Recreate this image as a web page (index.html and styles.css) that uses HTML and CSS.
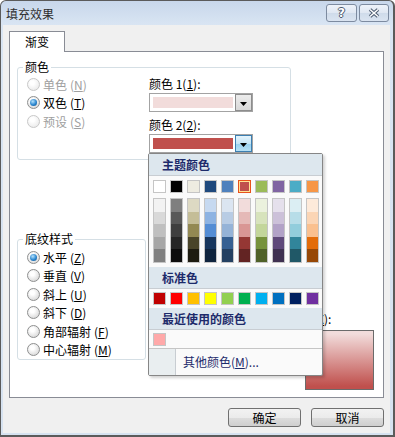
FILE: index.html
```html
<!DOCTYPE html>
<html lang="zh-CN">
  <head>
    <meta charset="UTF-8" />
    <title>填充效果</title>
    <link rel="stylesheet" href="styles.css">
  </head>
  <body>
    <div class="window">
      <div class="titlebar">
        <span class="title">填充效果</span>
        <div class="caption-btns">
          <span class="cap-btn help">?</span>
          <span class="cap-btn close">
            <svg width="12" height="10" viewBox="0 0 12 10">
              <path d="M2 1.5L10 8.5M10 1.5L2 8.5" stroke="#4a596e" stroke-width="3.6" />
              <path d="M2 1.5L10 8.5M10 1.5L2 8.5" stroke="#fff" stroke-width="1.6" />
            </svg>
          </span>
        </div>
      </div>

      <div class="client">
        <div class="tabs"><div class="tab">渐变</div></div>
        <div class="panel">
          <fieldset class="group colors">
            <legend>颜色</legend>
            <div class="color-body">
              <div class="options">
                <div class="opt disabled"><span class="radio"></span>单色<span class="key">(<u>N</u>)</span></div>
                <div class="opt"><span class="radio on"></span>双色<span class="key">(<u>T</u>)</span></div>
                <div class="opt disabled"><span class="radio"></span>预设<span class="key">(<u>S</u>)</span></div>
              </div>
              <div class="pickers">
                <div class="field-label">颜色 1(<u>1</u>):</div>
                <div class="combo">
                  <div class="well"><span class="chip chip-light"></span></div>
                  <span class="drop">
                    <svg width="7" height="4" viewBox="0 0 7 4"><path d="M0 0h7L3.5 4z" fill="#000" /></svg>
                  </span>
                </div>
                <div class="field-label second">颜色 2(<u>2</u>):</div>
                <div class="combo">
                  <div class="well"><span class="chip chip-dark"></span></div>
                  <span class="drop hot">
                    <svg width="7" height="4" viewBox="0 0 7 4"><path d="M0 0h7L3.5 4z" fill="#000" /></svg>
                  </span>
                </div>
              </div>
            </div>
          </fieldset>

          <div class="bottom-row">
            <fieldset class="group shading">
              <legend>底纹样式</legend>
              <div class="shading-body">
                <div class="opt"><span class="radio on"></span>水平<span class="key">(<u>Z</u>)</span></div>
                <div class="opt"><span class="radio"></span>垂直<span class="key">(<u>V</u>)</span></div>
                <div class="opt"><span class="radio"></span>斜上<span class="key">(<u>U</u>)</span></div>
                <div class="opt"><span class="radio"></span>斜下<span class="key">(<u>D</u>)</span></div>
                <div class="opt"><span class="radio"></span>角部辐射<span class="key">(<u>F</u>)</span></div>
                <div class="opt"><span class="radio"></span>中心辐射<span class="key">(<u>M</u>)</span></div>
              </div>
            </fieldset>
            <div class="sample">
              <div class="sample-label">示例(<u>X</u>):</div>
              <div class="sample-box"></div>
            </div>
          </div>
        </div>

        <div class="actions">
          <button class="button">确定</button>
          <button class="button">取消</button>
        </div>
      </div>

      <div class="popup">
        <div class="band">主题颜色</div>
        <div class="swatch-row theme-row" id="themeRow"></div>
        <div class="swatch-row shades" id="themeShades"></div>
        <div class="band gap">标准色</div>
        <div class="swatch-row tight" id="standardRow"></div>
        <div class="band gap-sm">最近使用的颜色</div>
        <div class="swatch-row tight" id="recentRow"></div>
        <div class="more">
          <span class="more-icon"></span>
          <span class="more-text">其他颜色(<u>M</u>)...</span>
        </div>
      </div>
    </div>

    <script>
      const themeColors = [
        ["#ffffff", "#f2f2f2", "#d9d9d9", "#bfbfbf", "#a6a6a6", "#808080"],
        ["#000000", "#7f7f7f", "#595959", "#3f3f3f", "#262626", "#0d0d0d"],
        ["#eeece1", "#ddd9c3", "#c4bd97", "#938953", "#494429", "#1d1b10"],
        ["#1f497d", "#c6d9f0", "#8db3e2", "#548dd4", "#17365d", "#0f243e"],
        ["#4f81bd", "#dbe5f1", "#b8cce4", "#95b3d7", "#366092", "#244061"],
        ["#c0504d", "#f2dcdb", "#e5b9b7", "#d99694", "#953734", "#632423"],
        ["#9bbb59", "#ebf1dd", "#d7e3bc", "#c3d69b", "#76923c", "#4f6128"],
        ["#8064a2", "#e5e0ec", "#ccc1d9", "#b2a2c7", "#5f497a", "#3f3151"],
        ["#4bacc6", "#dbeef3", "#b7dde8", "#92cddc", "#31859b", "#205867"],
        ["#f79646", "#fdeada", "#fbd5b5", "#fac08f", "#e36c09", "#974806"]
      ];
      const standardColors = [
        "#c00000", "#ff0000", "#ffc000", "#ffff00", "#92d050",
        "#00b050", "#00b0f0", "#0070c0", "#002060", "#7030a0"
      ];
      const recentColors = ["#ffa9a9"];
      const selected = "#c0504d";

      function swatch(color) {
        const el = document.createElement("span");
        el.className = color === selected ? "swatch selected" : "swatch";
        el.style.background = color;
        return el;
      }

      const themeRow = document.getElementById("themeRow");
      const themeShades = document.getElementById("themeShades");
      themeColors.forEach((col) => {
        themeRow.appendChild(swatch(col[0]));
        const column = document.createElement("span");
        column.className = "shade-col";
        col.slice(1).forEach((c) => {
          const cell = document.createElement("span");
          cell.className = "shade";
          cell.style.background = c;
          column.appendChild(cell);
        });
        themeShades.appendChild(column);
      });
      standardColors.forEach((c) => document.getElementById("standardRow").appendChild(swatch(c)));
      recentColors.forEach((c) => document.getElementById("recentRow").appendChild(swatch(c)));
    </script>
  </body>
</html>
```

FILE: styles.css
```css
* {
  box-sizing: border-box;
}
body {
  margin: 0;
  font-family: "Noto Sans CJK SC", "Noto Sans", sans-serif;
  font-size: 12px;
  color: #000;
  background: #fff;
}
.window {
  position: relative;
  width: 395px;
  height: 437px;
  border: 1px solid #5b5b5b;
  border-right-width: 2px;
  border-bottom-width: 2px;
  border-radius: 6px 6px 0 0;
  background: linear-gradient(#c8d7eb, #d9e5f3 24px, #d6e2f0);
  display: flex;
  flex-direction: column;
}
.titlebar {
  height: 24px;
  display: flex;
  align-items: center;
  padding: 0 4px 0 5px;
}
.title {
  flex: 1;
  color: #2e2e2e;
  line-height: 16px;
  padding-top: 1px;
}
.caption-btns {
  display: flex;
  gap: 2px;
}
.cap-btn {
  height: 18px;
  display: flex;
  align-items: center;
  justify-content: center;
  border: 1px solid #7d8ba0;
  border-radius: 3px;
  background: linear-gradient(#eef3fa, #dfe7f2 50%, #cfdbea 51%, #dae4f1);
}
.help {
  width: 31px;
  font-family: "DejaVu Sans", sans-serif;
  font-weight: bold;
  font-size: 12px;
  color: #fff;
  text-shadow: 1px 0 #4a596e, -1px 0 #4a596e, 0 1px #4a596e, 0 -1px #4a596e;
}
.close {
  width: 30px;
}

.client {
  flex: 1;
  margin: 0 3px 2px 2px;
  background: #f0f0f0;
  padding: 6px 6px 0;
}
.tabs {
  display: flex;
}
.tab {
  position: relative;
  z-index: 1;
  width: 56px;
  height: 21px;
  margin-bottom: -1px;
  border: 1px solid #898c95;
  border-bottom: 0;
  background: #fff;
  text-align: center;
  line-height: 20px;
}
.panel {
  height: 347px;
  border: 1px solid #898c95;
  background: #fff;
  padding: 7px 0 0 7px;
}

.group {
  margin: 0;
  padding: 0 0 0 5px;
  border: 1px solid #d5dfe5;
  border-radius: 3px;
  min-width: 0;
}
.group legend {
  padding: 0 2px;
  line-height: 16px;
}
.colors {
  width: 274px;
}
.color-body {
  display: grid;
  grid-template-columns: 126px 1fr;
  padding-bottom: 6px;
}
.options {
  padding-left: 4px;
}
.opt {
  display: flex;
  align-items: center;
  height: 18.5px;
  white-space: nowrap;
}
.opt.disabled {
  color: #a0a0a0;
}
.key {
  margin-left: 3px;
}
.radio {
  width: 13px;
  height: 13px;
  margin-right: 3px;
  border: 1px solid #8e8f8f;
  border-radius: 50%;
  background: radial-gradient(circle at 40% 35%, #fff 20%, #dcdcdc 75%, #f4f4f4);
  display: flex;
  align-items: center;
  justify-content: center;
}
.radio.on::after {
  content: "";
  width: 7px;
  height: 7px;
  border-radius: 50%;
  background: radial-gradient(circle at 40% 35%, #b5e2fc, #2a86cf 55%, #0d4a84);
}
.opt.disabled .radio {
  border-color: #c8c8c8;
  background: radial-gradient(circle at 40% 35%, #fff 20%, #ececec 75%, #f6f6f6);
}

.pickers {
  padding-top: 2px;
}
.field-label {
  line-height: 14px;
  margin-bottom: 2px;
  white-space: nowrap;
}
.field-label.second {
  margin-top: 6px;
}
.combo {
  width: 104px;
  height: 19px;
  display: flex;
  border: 1px solid #a3a3a3;
  background: #fff;
}
.well {
  flex: 1;
  padding: 3px 2px 3px 3px;
}
.chip {
  display: block;
  height: 11px;
}
.chip-light {
  background: #f2dcdb;
}
.chip-dark {
  background: #c0504d;
}
.drop {
  width: 17px;
  display: flex;
  align-items: center;
  justify-content: center;
  padding-top: 2px;
  border: 1px solid #8d8d8d;
  background: linear-gradient(#ececec, #d8d8d8);
}
.drop.hot {
  border-color: #3c7fb1;
  background: linear-gradient(#e5f4fc, #c4e5f6 50%, #98d1ef 51%, #b6e0f4);
}

.bottom-row {
  display: flex;
  align-items: flex-start;
  margin-top: 71px;
}
.shading {
  width: 129px;
}
.shading-body {
  padding: 1px 0 0 4px;
}
.sample {
  margin-left: auto;
  margin-right: 9px;
  padding-top: 81px;
}
.sample-label {
  line-height: 14px;
  margin: 0 0 4px -16px;
  white-space: nowrap;
}
.sample-box {
  width: 69px;
  height: 60px;
  border: 1px solid #6b6b6b;
  background: linear-gradient(#f2dcdb 5%, #c0504d 95%);
}

.actions {
  display: flex;
  justify-content: flex-end;
  gap: 10px;
  margin-top: 10px;
}
.button {
  width: 73px;
  height: 19px;
  padding: 0;
  border: 1px solid #707070;
  border-radius: 3px;
  background: linear-gradient(#f2f2f2, #ebebeb 50%, #dddddd 51%, #cfcfcf);
  font-family: inherit;
  font-size: 12px;
  line-height: 16px;
  color: #000;
}

.popup {
  position: absolute;
  left: 147px;
  top: 152px;
  width: 175px;
  height: 223px;
  border: 1px solid #868686;
  border-radius: 2px;
  background: #fafafa;
  box-shadow: 2px 2px 3px rgba(0, 0, 0, 0.18);
  display: flex;
  flex-direction: column;
}
.band {
  height: 22px;
  flex: none;
  padding-left: 13px;
  background: #dde7ee;
  border-bottom: 1px solid #c8cdd2;
  color: #1d2b6b;
  font-weight: bold;
  line-height: 21px;
}
.band.gap {
  margin-top: 4px;
}
.band.gap-sm {
  margin-top: 3px;
}
.swatch-row {
  display: flex;
  gap: 4px;
  padding-left: 4px;
  flex: none;
}
.theme-row {
  margin-top: 4px;
}
.shades {
  margin-top: 5px;
}
.tight {
  margin-top: 3px;
}
.swatch {
  width: 13px;
  height: 13px;
  border: 1px solid #c5c5c5;
}
.swatch.selected {
  border-color: #e8521b;
  box-shadow: inset 0 0 0 1px #ffe294;
}
.shade-col {
  width: 13px;
  height: 65px;
  border: 1px solid #c5c5c5;
  display: flex;
  flex-direction: column;
}
.shade {
  flex: 1;
}
.more {
  flex: none;
  height: 27px;
  margin-top: 2px;
  border-top: 1px solid #c5c5c5;
  display: flex;
}
.more-icon {
  width: 27px;
  background: #e9eef0;
  border-right: 1px solid #c8cdd2;
}
.more-text {
  padding-left: 7px;
  line-height: 25px;
  color: #1d2b6b;
}
```
